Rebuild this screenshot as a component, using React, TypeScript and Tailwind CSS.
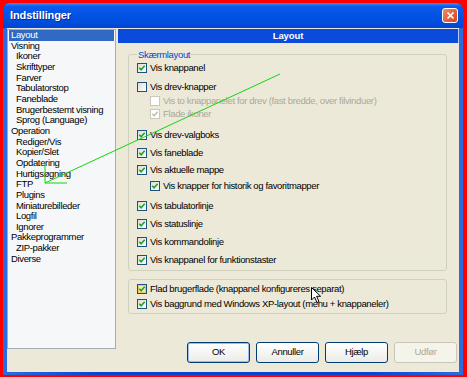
import type { ReactNode } from "react";

const tree: [string, number][] = [
  ["Layout", 0],
  ["Visning", 0],
  ["Ikoner", 1],
  ["Skrifttyper", 1],
  ["Farver", 1],
  ["Tabulatorstop", 1],
  ["Faneblade", 1],
  ["Brugerbestemt visning", 1],
  ["Sprog (Language)", 1],
  ["Operation", 0],
  ["Rediger/Vis", 1],
  ["Kopier/Slet", 1],
  ["Opdatering", 1],
  ["Hurtigsøgning", 1],
  ["FTP", 1],
  ["Plugins", 1],
  ["Miniaturebilleder", 1],
  ["Logfil", 1],
  ["Ignorer", 1],
  ["Pakkeprogrammer", 0],
  ["ZIP-pakker", 1],
  ["Diverse", 0],
];

interface Opt {
  label: string;
  checked: boolean;
  indent?: boolean;
  disabled?: boolean;
  mt: string;
}

const screenOpts: Opt[] = [
  { label: "Vis knappanel", checked: true, mt: "mt-0" },
  { label: "Vis drev-knapper", checked: false, mt: "mt-[6px]" },
  {
    label: "Vis to knappanelet for drev (fast bredde, over filvinduer)",
    checked: false,
    indent: true,
    disabled: true,
    mt: "mt-[1px]",
  },
  { label: "Flade ikoner", checked: true, indent: true, disabled: true, mt: "mt-0" },
  { label: "Vis drev-valgboks", checked: true, mt: "mt-[8px]" },
  { label: "Vis faneblade", checked: true, mt: "mt-[5px]" },
  { label: "Vis aktuelle mappe", checked: true, mt: "mt-[4px]" },
  { label: "Vis knapper for historik og favoritmapper", checked: true, indent: true, mt: "mt-[3px]" },
  { label: "Vis tabulatorlinje", checked: true, mt: "mt-[7px]" },
  { label: "Vis statuslinje", checked: true, mt: "mt-[5px]" },
  { label: "Vis kommandolinje", checked: true, mt: "mt-[5px]" },
  { label: "Vis knappanel for funktionstaster", checked: true, mt: "mt-[5px]" },
];

function CheckBox({ checked, disabled, hover }: { checked: boolean; disabled?: boolean; hover?: boolean }) {
  return (
    <span
      className={`w-[10px] h-[10px] shrink-0 border flex items-center justify-center ${
        disabled
          ? "border-[#CAC8BB] bg-white"
          : hover
            ? "border-[#1C5180] bg-[#F6EBB8] shadow-[inset_0_0_0_1px_#F5C75A]"
            : "border-[#1C5180] bg-[linear-gradient(135deg,#DCDCD6,#FFFFFF)]"
      }`}
    >
      {checked && (
        <svg width="8" height="8" viewBox="0 0 8 8">
          <polyline
            points="1.3,3.8 3.1,5.8 6.7,1.8"
            fill="none"
            stroke={disabled ? "#C2C0B4" : "#21A121"}
            strokeWidth={1.6}
          />
        </svg>
      )}
    </span>
  );
}

function OptRow({ opt, hover }: { opt: Opt; hover?: boolean }) {
  return (
    <div
      className={`h-[13px] flex items-center gap-[3px] ${opt.indent ? "pl-[21px]" : "pl-[8px]"} ${opt.mt}`}
    >
      <CheckBox checked={opt.checked} disabled={opt.disabled} hover={hover} />
      <span className={`whitespace-nowrap leading-[13px] ${opt.disabled ? "text-[#ACA899]" : "text-black"}`}>
        {opt.label}
      </span>
    </div>
  );
}

function XPButton({ children, variant }: { children: ReactNode; variant?: "default" | "disabled" }) {
  const cls =
    variant === "disabled"
      ? "border-[#C9C7BA] bg-[#F5F4EA] text-[#ACA899]"
      : variant === "default"
        ? "border-[#003C74] bg-[linear-gradient(to_bottom,#FFFFFF,#ECEBE6)] text-black shadow-[inset_0_0_0_1px_#9DBDF2]"
        : "border-[#003C74] bg-[linear-gradient(to_bottom,#FFFFFF,#ECEBE6)] text-black";
  return (
    <div className={`w-[63px] h-[21px] rounded-[3px] border flex items-center justify-center ${cls}`}>
      {children}
    </div>
  );
}

export default function App() {
  return (
    <div className="relative w-[467px] h-[377px] bg-[#FF0000] pt-[3px] pl-[3px] pr-[4px] pb-[2px] font-['Liberation_Sans',Arial,sans-serif] text-[9.5px] tracking-[-0.35px] overflow-hidden">
      <div className="w-[460px] h-[372px] flex flex-col rounded-t-[7px] overflow-hidden bg-[#0A45D2]">
        {/* title bar */}
        <div className="h-[25px] shrink-0 flex items-center justify-between pl-[7px] pr-[5px] bg-[linear-gradient(to_bottom,#3C8CF6_0%,#0C5BEA_14%,#0152E3_55%,#0046D4_100%)]">
          <span className="text-white font-bold text-[11px] tracking-[-0.1px] [text-shadow:1px_1px_#0A2A8C]">
            Indstillinger
          </span>
          <div className="w-[16px] h-[15px] rounded-[3px] border border-white bg-[linear-gradient(135deg,#EE8A63,#D9421A)] flex items-center justify-center">
            <svg width="9" height="9" viewBox="0 0 9 9">
              <path d="M1.5 1.5 L7.5 7.5 M7.5 1.5 L1.5 7.5" stroke="white" strokeWidth={1.7} />
            </svg>
          </div>
        </div>

        {/* body */}
        <div className="flex-1 flex pl-[4px] pr-[4px] pb-[3px] bg-[linear-gradient(to_right,#2E6BE0,#0A45D2_20%,#0A45D2_80%,#2E6BE0)]">
          <div className="flex-1 flex bg-[#ECE9D8] pt-[1px]">
            {/* tree */}
            <div className="w-[109px] h-[320px] shrink-0 border border-[#A5ACB5] bg-[#F6F7F9] px-[1px]">
              {tree.map(([name, level], i) => (
                <div
                  key={name}
                  className={`h-[10.67px] leading-[10.67px] whitespace-nowrap ${level ? "pl-[7px]" : "pl-[2px]"} ${
                    i === 0 ? "bg-[#316AC5] text-white" : "text-black"
                  }`}
                >
                  {name}
                </div>
              ))}
            </div>

            {/* right panel */}
            <div className="flex-1 ml-[2px] flex flex-col">
              <div className="h-[14px] bg-[#0A4BDB] border-r border-[#B9CCF5] text-white font-bold tracking-[-0.1px] flex items-center justify-center">
                Layout
              </div>

              <div className="relative mt-[11px] ml-[10px] w-[319px] border border-[#D0D0BF] rounded-[3px] pt-[6px] pb-[4px]">
                <span className="absolute -top-[7px] left-[8px] px-[1px] bg-[#ECE9D8] text-[#0046D5] leading-[13px]">
                  Skærmlayout
                </span>
                {screenOpts.map((o) => (
                  <OptRow key={o.label} opt={o} />
                ))}
              </div>

              <div className="mt-[8px] ml-[10px] w-[319px] border border-[#D0D0BF] rounded-[3px] pt-[2px] pb-[3px]">
                <OptRow
                  opt={{ label: "Flad brugerflade (knappanel konfigureres separat)", checked: true, mt: "mt-0" }}
                  hover
                />
                <OptRow
                  opt={{
                    label: "Vis baggrund med Windows XP-layout (menu + knappaneler)",
                    checked: true,
                    mt: "mt-[2px]",
                  }}
                />
              </div>

              <div className="mt-[28px] flex justify-end gap-[6px] pr-[2px]">
                <XPButton variant="default">OK</XPButton>
                <XPButton>Annuller</XPButton>
                <XPButton>Hjælp</XPButton>
                <XPButton variant="disabled">Udfør</XPButton>
              </div>
            </div>
          </div>
        </div>
      </div>

      {/* annotation lines */}
      <svg className="absolute left-0 top-0 pointer-events-none" width="467" height="377" viewBox="0 0 467 377">
        <path d="M280 74 L45 183 M45 163 L45 183 L67 183" stroke="#11D611" strokeWidth={1} fill="none" />
      </svg>

      {/* mouse cursor */}
      <svg className="absolute left-[311px] top-[287px] pointer-events-none" width="12" height="17" viewBox="0 0 12 17">
        <path d="M0.5 0.5 L0.5 13 L3.5 10 L6 15.5 L8 14.6 L5.6 9.3 L9.6 9.3 Z" fill="white" stroke="black" strokeWidth={1} />
      </svg>
    </div>
  );
}
